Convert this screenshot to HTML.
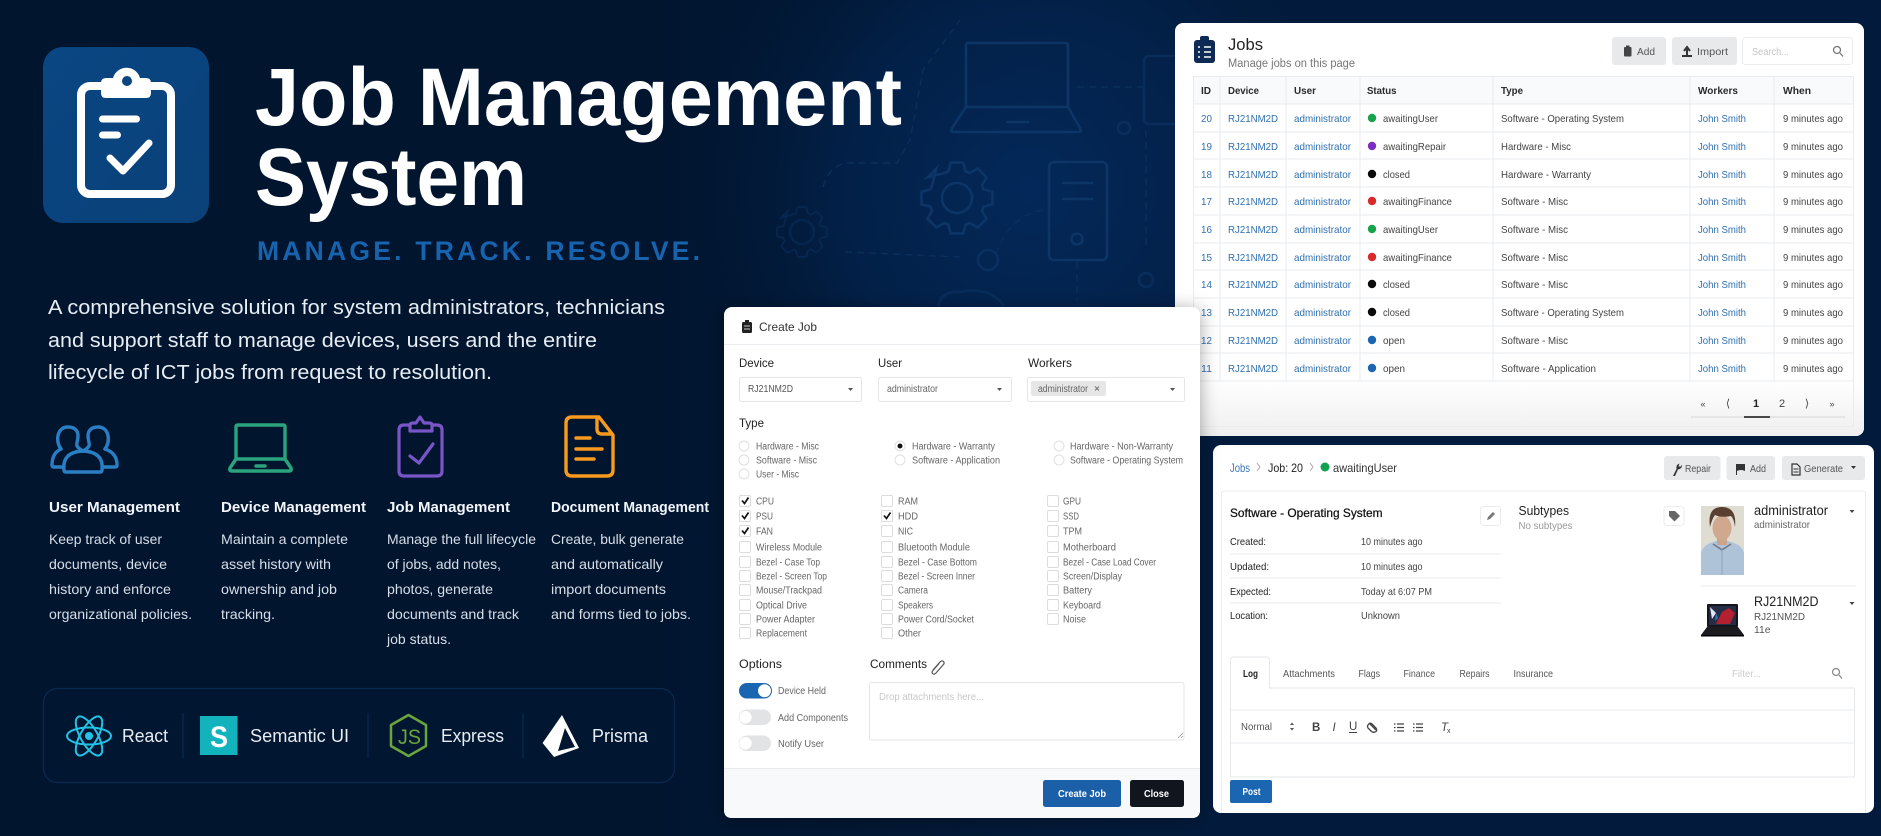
<!DOCTYPE html>
<html lang="en"><head><meta charset="utf-8"><title>Job Management System</title>
<style>
html,body{margin:0;padding:0;background:#01152f;width:1881px;height:836px;overflow:hidden}
svg{display:block}
text{font-family:"Liberation Sans",sans-serif;white-space:pre}
.b{font-weight:700}
.d{font-size:14px;fill:#d8dee8}
.h{font-size:15px;font-weight:700;fill:#f2f5f9}
.s{font-size:18.5px;fill:#e8edf3}
.c{font-size:10.5px;fill:#444}
.a{font-size:10.5px;fill:#2f6fb0}
.th{font-size:10.5px;font-weight:700;fill:#2a2a2a}
.m{font-size:10px;fill:#666}
.l{font-size:11.5px;fill:#222}
.k{font-size:10.5px;fill:#222}
.btn{font-size:10.5px;fill:#555}
.ln{stroke:#e9ebee;stroke-width:1;fill:none}
.cb{fill:#fff;stroke:#dcdcdc;stroke-width:1}
.ck{fill:none;stroke:#111;stroke-width:1.7}
.bg{fill:none;stroke:#0d3566;stroke-width:2.6}
.dash{fill:none;stroke:#0a2f5c;stroke-width:1.4;stroke-dasharray:7 5}
</style></head><body>
<svg xmlns="http://www.w3.org/2000/svg" width="1881" height="836" viewBox="0 0 1881 836">
<defs>
<linearGradient id="base" gradientUnits="userSpaceOnUse" x1="650" y1="0" x2="1150" y2="0"><stop offset="0" stop-color="#01152f"/><stop offset="1" stop-color="#021b3c"/></linearGradient>
<radialGradient id="bgg" gradientUnits="userSpaceOnUse" cx="1030" cy="190" r="340"><stop offset="0" stop-color="#03295a"/><stop offset=".55" stop-color="#03234e" stop-opacity=".75"/><stop offset="1" stop-color="#021b3c" stop-opacity="0"/></radialGradient>
<linearGradient id="lg" x1="0" y1="0" x2="1" y2="1"><stop offset="0" stop-color="#0a4683"/><stop offset="1" stop-color="#0a4178"/></linearGradient>
<linearGradient id="ft" x1="0" y1="0" x2="0" y2="1"><stop offset="0" stop-color="#fff"/><stop offset="1" stop-color="#efefef"/></linearGradient>
<filter id="sh" x="-10%" y="-10%" width="120%" height="120%"><feDropShadow dx="0" dy="2" stdDeviation="9" flood-color="#000" flood-opacity=".35"/></filter>
</defs>
<rect width="1881" height="836" fill="url(#base)"/>
<rect x="680" y="0" width="700" height="540" fill="url(#bgg)"/>

<!-- background decoration -->
<g>
<path class="bg" d="M968 43h98q2 0 2 2v62h-102v-62q0-2 2-2zM966 107l-14 21q-2 4 2 4h124q4 0 2-4l-12-21M1006 122h23"/>
<polygon class="bg" transform="translate(957 198)" points="-8.65,-26.6 -6.25,-35.45 6.25,-35.45 8.65,-26.6 12.7,-24.95 20.65,-29.5 29.5,-20.65 24.95,-12.7 26.6,-8.65 35.45,-6.25 35.45,6.25 26.6,8.65 24.95,12.7 29.5,20.65 20.65,29.5 12.7,24.95 8.65,26.6 6.25,35.45 -6.25,35.45 -8.65,26.6 -12.7,24.95 -20.65,29.5 -29.5,20.65 -24.95,12.7 -26.6,8.65 -35.45,6.25 -35.45,-6.25 -26.6,-8.65 -24.95,-12.7 -20.65,-29.5 -29.5,-20.65 -12.7,-24.95"/>
<circle class="bg" cx="957" cy="198" r="15"/>
<rect class="bg" x="1049" y="162" width="58" height="98" rx="5"/>
<path class="bg" d="M1062 183h31M1062 199h31"/>
<circle class="bg" cx="1077" cy="239" r="5.5"/>
<rect class="bg" x="1144" y="56" width="40" height="68" rx="5" opacity=".6"/>
<circle class="bg" cx="988" cy="260" r="10" opacity=".7"/>
<circle class="bg" cx="1146" cy="280" r="7" opacity=".6"/>
<circle class="bg" cx="1124" cy="128" r="6" opacity=".6"/>
<polygon class="bg" opacity=".45" transform="translate(802 232) scale(.7)" points="-8.65,-26.6 -6.25,-35.45 6.25,-35.45 8.65,-26.6 12.7,-24.95 20.65,-29.5 29.5,-20.65 24.95,-12.7 26.6,-8.65 35.45,-6.25 35.45,6.25 26.6,8.65 24.95,12.7 29.5,20.65 20.65,29.5 12.7,24.95 8.65,26.6 6.25,35.45 -6.25,35.45 -8.65,26.6 -12.7,24.95 -20.65,29.5 -29.5,20.65 -24.95,12.7 -26.6,8.65 -35.45,6.25 -35.45,-6.25 -26.6,-8.65 -24.95,-12.7 -20.65,-29.5 -29.5,-20.65 -12.7,-24.95"/>
<circle class="bg" cx="802" cy="232" r="12" opacity=".4"/>
<path class="dash" d="M823 187Q830 164 848 163H897L910 140L923 70L960 20"/>
<path class="dash" d="M845 252L960 257M996 254Q1010 215 1043 210M1077 87H1143M1146 130V250M1077 262V300"/>
<path class="bg" opacity=".5" d="M938 306q4-16 22-14q30-6 44 14"/>
</g>

<!-- logo -->
<rect x="43" y="47" width="166" height="176" rx="20" fill="url(#lg)"/>
<rect x="81" y="86" width="90" height="108" rx="9" fill="none" stroke="#fff" stroke-width="8"/>
<path d="M106 78h7a14 14 0 0 1 27 0h6q5 0 5 5v10q0 5-5 5h-40q-5 0-5-5v-10q0-5 5-5z" fill="#fff"/>
<circle cx="127" cy="81" r="5" fill="#0a4580"/>
<path d="M102.500 119h34M102.500 135h15M110 158l13 13l26-28" fill="none" stroke="#fff" stroke-width="7" stroke-linecap="round" stroke-linejoin="round"/>

<!-- title -->
<text class="b" x="255" y="125" font-size="82" fill="#fff" textLength="647" lengthAdjust="spacingAndGlyphs">Job Management</text>
<text class="b" x="255" y="205" font-size="82" fill="#fff" textLength="272" lengthAdjust="spacingAndGlyphs">System</text>
<text class="b" x="257" y="260" font-size="26.500" fill="#1763ad" textLength="443">MANAGE. TRACK. RESOLVE.</text>
<g font-size="20" fill="#e8edf3">
<text x="48" y="314" textLength="617" lengthAdjust="spacingAndGlyphs">A comprehensive solution for system administrators, technicians</text>
<text x="48" y="347" textLength="549" lengthAdjust="spacingAndGlyphs">and support staff to manage devices, users and the entire</text>
<text x="48" y="379" textLength="444" lengthAdjust="spacingAndGlyphs">lifecycle of ICT jobs from request to resolution.</text>
</g>

<!-- feature icons -->
<g fill="none" stroke="#2a7fc4" stroke-width="3.400" stroke-linejoin="round" stroke-linecap="round">
<path d="M64 470Q62 452 83 451Q104 452 102 470Q102 472 100 472H66Q64 472 64 470Z"/>
<path d="M61 449C55 441 57 427 68 427C75 427 78 431 78 436C78 441 76 443 77 446Q79 449 83 451"/>
<path d="M105 449C111 441 109 427 98 427C91 427 88 431 88 436C88 441 90 443 89 446Q87 449 83 451"/>
<path d="M61 449Q52 453 52 465Q52 467 54 467H62M105 449Q117 453 117 465Q117 467 115 467H104"/>
</g>
<g fill="none" stroke="#2ba37d" stroke-width="3.400" stroke-linejoin="round" stroke-linecap="round">
<path d="M238 425h45q2 0 2 2v32h-49v-32q0-2 2-2zM236 459l-6 9q-1 3 2 3h57q3 0 2-3l-6-9"/>
<path d="M256 466h9"/>
</g>
<g fill="none" stroke="#7a55c7" stroke-width="3.200" stroke-linejoin="round" stroke-linecap="round">
<path d="M409 425h-5q-5 0-5 5v41q0 5 5 5h33q5 0 5-5v-41q0-5-5-5h-5"/>
<path d="M410 431v-6q0-2 3-2h3l4-6l4 6h5q3 0 3 2v6z"/>
<path d="M410 456l9 7l14-19"/>
</g>
<g fill="none" stroke="#f79a1e" stroke-width="3.400" stroke-linejoin="round" stroke-linecap="round">
<path d="M572 417h27l14 18v35q0 6-6 6h-35q-6 0-6-6v-47q0-6 6-6z"/>
<path d="M597 418v11q0 5 5 5h10M576 438h14M576 449h26M576 459h18"/>
</g>

<!-- feature text -->
<text class="h" x="49" y="512" textLength="131" lengthAdjust="spacingAndGlyphs">User Management</text>
<text class="h" x="221" y="512" textLength="145" lengthAdjust="spacingAndGlyphs">Device Management</text>
<text class="h" x="387" y="512" textLength="123" lengthAdjust="spacingAndGlyphs">Job Management</text>
<text class="h" x="551" y="512" textLength="158" lengthAdjust="spacingAndGlyphs">Document Management</text>
<text class="d" x="49" y="544" textLength="113" lengthAdjust="spacingAndGlyphs">Keep track of user</text>
<text class="d" x="49" y="569" textLength="118" lengthAdjust="spacingAndGlyphs">documents, device</text>
<text class="d" x="49" y="594" textLength="122" lengthAdjust="spacingAndGlyphs">history and enforce</text>
<text class="d" x="49" y="619" textLength="143" lengthAdjust="spacingAndGlyphs">organizational policies.</text>
<text class="d" x="221" y="544" textLength="127" lengthAdjust="spacingAndGlyphs">Maintain a complete</text>
<text class="d" x="221" y="569" textLength="110" lengthAdjust="spacingAndGlyphs">asset history with</text>
<text class="d" x="221" y="594" textLength="116" lengthAdjust="spacingAndGlyphs">ownership and job</text>
<text class="d" x="221" y="619" textLength="54" lengthAdjust="spacingAndGlyphs">tracking.</text>
<text class="d" x="387" y="544" textLength="149" lengthAdjust="spacingAndGlyphs">Manage the full lifecycle</text>
<text class="d" x="387" y="569" textLength="114" lengthAdjust="spacingAndGlyphs">of jobs, add notes,</text>
<text class="d" x="387" y="594" textLength="106" lengthAdjust="spacingAndGlyphs">photos, generate</text>
<text class="d" x="387" y="619" textLength="132" lengthAdjust="spacingAndGlyphs">documents and track</text>
<text class="d" x="387" y="644" textLength="64" lengthAdjust="spacingAndGlyphs">job status.</text>
<text class="d" x="551" y="544" textLength="133" lengthAdjust="spacingAndGlyphs">Create, bulk generate</text>
<text class="d" x="551" y="569" textLength="112" lengthAdjust="spacingAndGlyphs">and automatically</text>
<text class="d" x="551" y="594" textLength="115" lengthAdjust="spacingAndGlyphs">import documents</text>
<text class="d" x="551" y="619" textLength="140" lengthAdjust="spacingAndGlyphs">and forms tied to jobs.</text>

<!-- tech box -->
<rect x="43.500" y="688.500" width="631" height="94" rx="14" fill="#011630" stroke="#082a4e" stroke-width="1.300"/>
<path d="M183 713v45M368 713v45M523 713v45" stroke="#082a4e" stroke-width="1.300"/>
<g fill="none" stroke="#22c3e6" stroke-width="2"><ellipse cx="89" cy="736" rx="22" ry="8.500"/><ellipse cx="89" cy="736" rx="22" ry="8.500" transform="rotate(60 89 736)"/><ellipse cx="89" cy="736" rx="22" ry="8.500" transform="rotate(120 89 736)"/></g>
<circle cx="89" cy="736" r="4" fill="#22c3e6"/>
<text class="s" x="122" y="742" textLength="46" lengthAdjust="spacingAndGlyphs">React</text>
<rect x="200" y="716" width="37.500" height="39" fill="#13b3bd"/>
<text class="b" x="210" y="747" font-size="30" fill="#fff" textLength="18" lengthAdjust="spacingAndGlyphs">S</text>
<text class="s" x="250" y="742" textLength="99" lengthAdjust="spacingAndGlyphs">Semantic UI</text>
<polygon points="408.500,715 426,725 426,746 408.500,756 391,746 391,725" fill="none" stroke="#6ba53d" stroke-width="2.500" stroke-linejoin="round"/>
<text x="398" y="744" font-size="21" fill="#6ba53d" textLength="23" lengthAdjust="spacingAndGlyphs">JS</text>
<text class="s" x="441" y="742" textLength="63" lengthAdjust="spacingAndGlyphs">Express</text>
<polygon points="562,715 579,748 554,757 542.600,743" fill="#fff"/>
<polygon points="565,728 575,747 558,751" fill="#011630"/>
<text class="s" x="592" y="742" textLength="56" lengthAdjust="spacingAndGlyphs">Prisma</text>

<!-- JOBS CARD -->
<rect x="1175" y="23" width="689" height="413" rx="8" fill="#fff"/>
<rect x="1175" y="380" width="689" height="56" rx="8" fill="url(#ft)"/>
<rect x="1194" y="40" width="21" height="23" rx="3" fill="#0d2b55"/>
<rect x="1200" y="36" width="9" height="7" rx="2" fill="#0d2b55"/>
<path d="M1204 47h7M1204 52h7M1204 57h7M1198 47h2M1198 52h2M1198 57h2" stroke="#fff" stroke-width="1.500"/>
<text x="1228" y="50" font-size="17" fill="#222" textLength="35" lengthAdjust="spacingAndGlyphs">Jobs</text>
<text x="1228" y="67" font-size="11.500" fill="#777" textLength="127" lengthAdjust="spacingAndGlyphs">Manage jobs on this page</text>
<rect x="1612" y="37" width="54" height="28" rx="3" fill="#e8e9ea"/>
<rect x="1624" y="47" width="7.500" height="9.500" rx="1" fill="#444"/><rect x="1626" y="45.500" width="3.500" height="2" fill="#444"/>
<text class="btn" x="1637" y="55" textLength="18" lengthAdjust="spacingAndGlyphs">Add</text>
<rect x="1672" y="37" width="65" height="28" rx="3" fill="#e8e9ea"/>
<path d="M1687 56v-7m-3 2l3-4l3 4M1682 56h10" fill="none" stroke="#333" stroke-width="2"/>
<text class="btn" x="1697" y="55" textLength="31" lengthAdjust="spacingAndGlyphs">Import</text>
<rect x="1742.500" y="37.500" width="110" height="27" rx="3" fill="#fff" stroke="#eceded"/>
<text x="1752" y="55" font-size="10.500" fill="#c4c4c4" textLength="37" lengthAdjust="spacingAndGlyphs">Search...</text>
<circle cx="1837" cy="50" r="3.500" fill="none" stroke="#777" stroke-width="1.300"/><path d="M1840 53l3 3.500" stroke="#777" stroke-width="1.300"/>

<rect x="1193" y="76" width="660" height="28" fill="#f9fafb"/>
<rect x="1193.500" y="76.500" width="660" height="350" class="ln"/>
<path class="ln" d="M1193 104h660M1193 132h660M1193 159h660M1193 187h660M1193 215h660M1193 243h660M1193 270h660M1193 298h660M1193 326h660M1193 353h660M1193 381h660M1220 76v305M1286 76v305M1360 76v305M1493 76v305M1690 76v305M1774 76v305"/>
<text class="th" x="1201" y="94" textLength="10" lengthAdjust="spacingAndGlyphs">ID</text>
<text class="th" x="1228" y="94" textLength="31" lengthAdjust="spacingAndGlyphs">Device</text>
<text class="th" x="1294" y="94" textLength="22" lengthAdjust="spacingAndGlyphs">User</text>
<text class="th" x="1367" y="94" textLength="29.500" lengthAdjust="spacingAndGlyphs">Status</text>
<text class="th" x="1501" y="94" textLength="22" lengthAdjust="spacingAndGlyphs">Type</text>
<text class="th" x="1698" y="94" textLength="40" lengthAdjust="spacingAndGlyphs">Workers</text>
<text class="th" x="1783" y="94" textLength="28" lengthAdjust="spacingAndGlyphs">When</text>

<g>
<circle cx="1372" cy="118" r="4.200" fill="#16a34a"/><circle cx="1372" cy="146" r="4.200" fill="#7b2fbe"/><circle cx="1372" cy="174" r="4.200" fill="#0a0a0a"/><circle cx="1372" cy="201" r="4.200" fill="#db2828"/><circle cx="1372" cy="229" r="4.200" fill="#16a34a"/><circle cx="1372" cy="257" r="4.200" fill="#db2828"/><circle cx="1372" cy="284" r="4.200" fill="#0a0a0a"/><circle cx="1372" cy="312" r="4.200" fill="#0a0a0a"/><circle cx="1372" cy="340" r="4.200" fill="#1a66b0"/><circle cx="1372" cy="368" r="4.200" fill="#1a66b0"/>
</g>
<!-- rows -->
<g>
<text class="a" x="1201" y="122" textLength="11" lengthAdjust="spacingAndGlyphs">20</text><text class="a" x="1228" y="122" textLength="50" lengthAdjust="spacingAndGlyphs">RJ21NM2D</text><text class="a" x="1294" y="122" textLength="57" lengthAdjust="spacingAndGlyphs">administrator</text><text class="c" x="1383" y="122" textLength="55" lengthAdjust="spacingAndGlyphs">awaitingUser</text><text class="c" x="1501" y="122" textLength="123" lengthAdjust="spacingAndGlyphs">Software - Operating System</text><text class="a" x="1698" y="122" textLength="48" lengthAdjust="spacingAndGlyphs">John Smith</text><text class="c" x="1783" y="122" textLength="60" lengthAdjust="spacingAndGlyphs">9 minutes ago</text>
<text class="a" x="1201" y="150" textLength="11" lengthAdjust="spacingAndGlyphs">19</text><text class="a" x="1228" y="150" textLength="50" lengthAdjust="spacingAndGlyphs">RJ21NM2D</text><text class="a" x="1294" y="150" textLength="57" lengthAdjust="spacingAndGlyphs">administrator</text><text class="c" x="1383" y="150" textLength="63" lengthAdjust="spacingAndGlyphs">awaitingRepair</text><text class="c" x="1501" y="150" textLength="70" lengthAdjust="spacingAndGlyphs">Hardware - Misc</text><text class="a" x="1698" y="150" textLength="48" lengthAdjust="spacingAndGlyphs">John Smith</text><text class="c" x="1783" y="150" textLength="60" lengthAdjust="spacingAndGlyphs">9 minutes ago</text>
<text class="a" x="1201" y="178" textLength="11" lengthAdjust="spacingAndGlyphs">18</text><text class="a" x="1228" y="178" textLength="50" lengthAdjust="spacingAndGlyphs">RJ21NM2D</text><text class="a" x="1294" y="178" textLength="57" lengthAdjust="spacingAndGlyphs">administrator</text><text class="c" x="1383" y="178" textLength="27" lengthAdjust="spacingAndGlyphs">closed</text><text class="c" x="1501" y="178" textLength="90" lengthAdjust="spacingAndGlyphs">Hardware - Warranty</text><text class="a" x="1698" y="178" textLength="48" lengthAdjust="spacingAndGlyphs">John Smith</text><text class="c" x="1783" y="178" textLength="60" lengthAdjust="spacingAndGlyphs">9 minutes ago</text>
<text class="a" x="1201" y="205" textLength="11" lengthAdjust="spacingAndGlyphs">17</text><text class="a" x="1228" y="205" textLength="50" lengthAdjust="spacingAndGlyphs">RJ21NM2D</text><text class="a" x="1294" y="205" textLength="57" lengthAdjust="spacingAndGlyphs">administrator</text><text class="c" x="1383" y="205" textLength="69" lengthAdjust="spacingAndGlyphs">awaitingFinance</text><text class="c" x="1501" y="205" textLength="67" lengthAdjust="spacingAndGlyphs">Software - Misc</text><text class="a" x="1698" y="205" textLength="48" lengthAdjust="spacingAndGlyphs">John Smith</text><text class="c" x="1783" y="205" textLength="60" lengthAdjust="spacingAndGlyphs">9 minutes ago</text>
<text class="a" x="1201" y="233" textLength="11" lengthAdjust="spacingAndGlyphs">16</text><text class="a" x="1228" y="233" textLength="50" lengthAdjust="spacingAndGlyphs">RJ21NM2D</text><text class="a" x="1294" y="233" textLength="57" lengthAdjust="spacingAndGlyphs">administrator</text><text class="c" x="1383" y="233" textLength="55" lengthAdjust="spacingAndGlyphs">awaitingUser</text><text class="c" x="1501" y="233" textLength="67" lengthAdjust="spacingAndGlyphs">Software - Misc</text><text class="a" x="1698" y="233" textLength="48" lengthAdjust="spacingAndGlyphs">John Smith</text><text class="c" x="1783" y="233" textLength="60" lengthAdjust="spacingAndGlyphs">9 minutes ago</text>
<text class="a" x="1201" y="261" textLength="11" lengthAdjust="spacingAndGlyphs">15</text><text class="a" x="1228" y="261" textLength="50" lengthAdjust="spacingAndGlyphs">RJ21NM2D</text><text class="a" x="1294" y="261" textLength="57" lengthAdjust="spacingAndGlyphs">administrator</text><text class="c" x="1383" y="261" textLength="69" lengthAdjust="spacingAndGlyphs">awaitingFinance</text><text class="c" x="1501" y="261" textLength="67" lengthAdjust="spacingAndGlyphs">Software - Misc</text><text class="a" x="1698" y="261" textLength="48" lengthAdjust="spacingAndGlyphs">John Smith</text><text class="c" x="1783" y="261" textLength="60" lengthAdjust="spacingAndGlyphs">9 minutes ago</text>
<text class="a" x="1201" y="288" textLength="11" lengthAdjust="spacingAndGlyphs">14</text><text class="a" x="1228" y="288" textLength="50" lengthAdjust="spacingAndGlyphs">RJ21NM2D</text><text class="a" x="1294" y="288" textLength="57" lengthAdjust="spacingAndGlyphs">administrator</text><text class="c" x="1383" y="288" textLength="27" lengthAdjust="spacingAndGlyphs">closed</text><text class="c" x="1501" y="288" textLength="67" lengthAdjust="spacingAndGlyphs">Software - Misc</text><text class="a" x="1698" y="288" textLength="48" lengthAdjust="spacingAndGlyphs">John Smith</text><text class="c" x="1783" y="288" textLength="60" lengthAdjust="spacingAndGlyphs">9 minutes ago</text>
<text class="a" x="1201" y="316" textLength="11" lengthAdjust="spacingAndGlyphs">13</text><text class="a" x="1228" y="316" textLength="50" lengthAdjust="spacingAndGlyphs">RJ21NM2D</text><text class="a" x="1294" y="316" textLength="57" lengthAdjust="spacingAndGlyphs">administrator</text><text class="c" x="1383" y="316" textLength="27" lengthAdjust="spacingAndGlyphs">closed</text><text class="c" x="1501" y="316" textLength="123" lengthAdjust="spacingAndGlyphs">Software - Operating System</text><text class="a" x="1698" y="316" textLength="48" lengthAdjust="spacingAndGlyphs">John Smith</text><text class="c" x="1783" y="316" textLength="60" lengthAdjust="spacingAndGlyphs">9 minutes ago</text>
<text class="a" x="1201" y="344" textLength="11" lengthAdjust="spacingAndGlyphs">12</text><text class="a" x="1228" y="344" textLength="50" lengthAdjust="spacingAndGlyphs">RJ21NM2D</text><text class="a" x="1294" y="344" textLength="57" lengthAdjust="spacingAndGlyphs">administrator</text><text class="c" x="1383" y="344" textLength="22" lengthAdjust="spacingAndGlyphs">open</text><text class="c" x="1501" y="344" textLength="67" lengthAdjust="spacingAndGlyphs">Software - Misc</text><text class="a" x="1698" y="344" textLength="48" lengthAdjust="spacingAndGlyphs">John Smith</text><text class="c" x="1783" y="344" textLength="60" lengthAdjust="spacingAndGlyphs">9 minutes ago</text>
<text class="a" x="1201" y="372" textLength="11" lengthAdjust="spacingAndGlyphs">11</text><text class="a" x="1228" y="372" textLength="50" lengthAdjust="spacingAndGlyphs">RJ21NM2D</text><text class="a" x="1294" y="372" textLength="57" lengthAdjust="spacingAndGlyphs">administrator</text><text class="c" x="1383" y="372" textLength="22" lengthAdjust="spacingAndGlyphs">open</text><text class="c" x="1501" y="372" textLength="95" lengthAdjust="spacingAndGlyphs">Software - Application</text><text class="a" x="1698" y="372" textLength="48" lengthAdjust="spacingAndGlyphs">John Smith</text><text class="c" x="1783" y="372" textLength="60" lengthAdjust="spacingAndGlyphs">9 minutes ago</text>
</g>
<!-- pagination -->
<g font-size="11" fill="#444" text-anchor="middle">
<text x="1703" y="407" font-size="9">«</text><text x="1728" y="407">⟨</text><text x="1756" y="407" class="b" fill="#222">1</text><text x="1782" y="407">2</text><text x="1807" y="407">⟩</text><text x="1832" y="407" font-size="9">»</text>
</g>
<path d="M1691 417h154" stroke="#dcdcdc" stroke-width="1.200"/><path d="M1744 417h26" stroke="#111" stroke-width="1.600"/>

<!-- DETAIL CARD -->
<rect x="1213" y="445" width="661" height="368" rx="8" fill="#fff"/>
<text x="1230" y="472" font-size="12" fill="#3b78b9" textLength="20" lengthAdjust="spacingAndGlyphs">Jobs</text>
<path d="M1257 463l3 4l-3 4M1310 463l3 4l-3 4" fill="none" stroke="#aaa"/>
<text x="1268" y="472" font-size="12" fill="#222" textLength="35" lengthAdjust="spacingAndGlyphs">Job: 20</text>
<circle cx="1325" cy="467" r="4.500" fill="#12a150"/>
<text x="1333" y="472" font-size="12" fill="#333" textLength="64" lengthAdjust="spacingAndGlyphs">awaitingUser</text>
<rect x="1664" y="456" width="56.500" height="24" rx="3" fill="#e8e9ea"/>
<path d="M1673 476l3.500-7q-1-4 3-5.500l-1 3h2.500l1-2q.5 4-4 5l-3 6.500z" fill="#333"/>
<text class="btn" x="1685" y="472" textLength="26" lengthAdjust="spacingAndGlyphs">Repair</text>
<rect x="1726.500" y="456" width="48.500" height="24" rx="3" fill="#e8e9ea"/>
<path d="M1736 464h9v7q-4-2-8 0v4h-1z" fill="#333"/>
<text class="btn" x="1750" y="472" textLength="16" lengthAdjust="spacingAndGlyphs">Add</text>
<rect x="1782" y="456" width="83" height="24" rx="3" fill="#e8e9ea"/>
<path d="M1792 464h5l3 3v8h-8z" fill="none" stroke="#333" stroke-width="1.200"/><path d="M1793.500 469h5M1793.500 472h5" stroke="#333"/>
<text class="btn" x="1804" y="472" textLength="39" lengthAdjust="spacingAndGlyphs">Generate</text>
<path d="M1851 466h5l-2.500 3z" fill="#333"/>
<path d="M1221.500 813v-319q0-3 3-3h638q3 0 3 3v319" fill="none" stroke="#eceded"/>

<text x="1230" y="517" font-size="12" fill="#111" stroke="#111" stroke-width=".25" textLength="152.500" lengthAdjust="spacingAndGlyphs">Software - Operating System</text>
<rect x="1480.500" y="506.500" width="20" height="19" rx="3" fill="#fff" stroke="#ececec"/>
<path d="M1487 520l1-3l5-5l2 2l-5 5z" fill="#777"/>
<text class="k" x="1230" y="545" textLength="36" lengthAdjust="spacingAndGlyphs">Created:</text>
<text class="k" x="1230" y="570" textLength="39" lengthAdjust="spacingAndGlyphs">Updated:</text>
<text class="k" x="1230" y="595" textLength="41" lengthAdjust="spacingAndGlyphs">Expected:</text>
<text class="k" x="1230" y="619" textLength="38" lengthAdjust="spacingAndGlyphs">Location:</text>
<text class="c" x="1361" y="545" textLength="61.500" lengthAdjust="spacingAndGlyphs">10 minutes ago</text>
<text class="c" x="1361" y="570" textLength="61.500" lengthAdjust="spacingAndGlyphs">10 minutes ago</text>
<text class="c" x="1361" y="595" textLength="71" lengthAdjust="spacingAndGlyphs">Today at 6:07 PM</text>
<text class="c" x="1361" y="619" textLength="39" lengthAdjust="spacingAndGlyphs">Unknown</text>
<path class="ln" d="M1230 554h271M1230 578h271M1230 603h271M1701 586h155"/>
<text x="1518.500" y="515" font-size="13" fill="#222" textLength="50.500" lengthAdjust="spacingAndGlyphs">Subtypes</text>
<text x="1518.500" y="529" font-size="10.500" fill="#999" textLength="54" lengthAdjust="spacingAndGlyphs">No subtypes</text>
<rect x="1664" y="506.500" width="20" height="19" rx="3" fill="#fff" stroke="#ececec"/>
<path d="M1669 511h6l5 5l-5.500 5.500l-5.500-5.500z" fill="#666"/>
<!-- photo -->
<rect x="1701" y="506" width="43" height="69" rx="1" fill="#dfdcd2"/>
<path d="M1701 575v-22q2-8 12-11l9-3l9 3q11 3 13 11v22z" fill="#aec2d8"/>
<rect x="1717" y="536" width="10" height="9" fill="#c9a58c"/>
<path d="M1713 544l9 6l9-6" fill="none" stroke="#6f7680" stroke-width="1.400"/>
<ellipse cx="1722" cy="528" rx="9.500" ry="12.500" fill="#cfa88e"/>
<path d="M1710 527q-3-20 12-20q15 0 13 20q-1-8-4-11q-10 2-16-1q-3 4-5 12z" fill="#5a4030"/>
<path d="M1722 548v27" stroke="#8fa5bd" stroke-width="1"/>
<text x="1754" y="515" font-size="13.500" fill="#222" textLength="74" lengthAdjust="spacingAndGlyphs">administrator</text>
<text x="1754" y="528" font-size="10.500" fill="#666" textLength="56" lengthAdjust="spacingAndGlyphs">administrator</text>
<path d="M1849.500 510h5l-2.500 3zM1849.500 602h5l-2.500 3z" fill="#444"/>
<!-- laptop -->
<rect x="1707" y="604" width="31" height="23" rx="1" fill="#15151b"/>
<path d="M1709 606h27v19h-27z" fill="#252c45"/>
<path d="M1716 624l6-12l7-4l6 5l-5 11z" fill="#b3202f"/><path d="M1710 607l6 6l-4 6z" fill="#dfe8f5"/><path d="M1716 613l2 5l-3 3z" fill="#3d74b9"/>
<path d="M1707 627h31l6 8h-43z" fill="#1b1b20"/><rect x="1701" y="635" width="43" height="1.500" fill="#000"/>
<text x="1754" y="606" font-size="13.500" fill="#222" textLength="64.500" lengthAdjust="spacingAndGlyphs">RJ21NM2D</text>
<text x="1754" y="620" font-size="10.500" fill="#555" textLength="51" lengthAdjust="spacingAndGlyphs">RJ21NM2D</text>
<text x="1754" y="633" font-size="10.500" fill="#555" textLength="16.500" lengthAdjust="spacingAndGlyphs">11e</text>
<!-- tabs -->
<path d="M1230.500 777v-117q0-3 3-3h33q3 0 3 3v28h585v89z" fill="#fff" stroke="#e6e7e8"/>
<path class="ln" d="M1231 710h624M1231 743h624"/>
<text class="b" x="1243" y="677" font-size="10.500" fill="#222" textLength="15" lengthAdjust="spacingAndGlyphs">Log</text>
<text class="btn" x="1283" y="677" textLength="52" lengthAdjust="spacingAndGlyphs">Attachments</text>
<text class="btn" x="1358.500" y="677" textLength="21.500" lengthAdjust="spacingAndGlyphs">Flags</text>
<text class="btn" x="1403.500" y="677" textLength="31.500" lengthAdjust="spacingAndGlyphs">Finance</text>
<text class="btn" x="1459.500" y="677" textLength="30" lengthAdjust="spacingAndGlyphs">Repairs</text>
<text class="btn" x="1513.500" y="677" textLength="39.500" lengthAdjust="spacingAndGlyphs">Insurance</text>
<text x="1732" y="677" font-size="10.500" fill="#ccc" textLength="29" lengthAdjust="spacingAndGlyphs">Filter...</text>
<circle cx="1836" cy="672" r="3.500" fill="none" stroke="#888" stroke-width="1.200"/><path d="M1839 675l3 3.500" stroke="#888" stroke-width="1.200"/>
<text class="btn" x="1241" y="730" textLength="31" lengthAdjust="spacingAndGlyphs">Normal</text>
<path d="M1290 725l2-2.500l2 2.500zM1290 728l2 2.500l2-2.500z" fill="#555"/>
<text class="b" x="1312" y="731" font-size="11.500" fill="#444">B</text>
<text x="1332.500" y="731" font-size="11.500" font-style="italic" fill="#444">I</text>
<text x="1349" y="730" font-size="11.500" fill="#444">U</text><path d="M1349 732.500h8" stroke="#444"/>
<path d="M1369 723l7 7M1368 725q2-3 4-1l4 4q2 3-1 4q-2 1-4-1l-3-3q-1-2 0-3z" fill="none" stroke="#444" stroke-width="1.300"/>
<path d="M1397 724h7M1397 727.500h7M1397 731h7M1394 724h1.500M1394 727.500h1.500M1394 731h1.500M1416 724h7M1416 727.500h7M1416 731h7M1413 724h1.500M1413 727.500h1.500M1413 731h1.500" stroke="#444" stroke-width="1.200"/>
<text x="1441" y="731" font-size="11.500" font-style="italic" fill="#444">T</text><text x="1447" y="733" font-size="7" fill="#444">x</text>
<rect x="1230" y="780" width="42" height="23" rx="2" fill="#1a66b0"/>
<text class="b" x="1242.500" y="795" font-size="10.500" fill="#fff" textLength="18" lengthAdjust="spacingAndGlyphs">Post</text>

<!-- MODAL -->
<rect x="724" y="307" width="476" height="511" rx="8" fill="#fff" filter="url(#sh)"/>
<path d="M724 768h476v42q0 8-8 8h-460q-8 0-8-8z" fill="#f8f9fa"/>
<path class="ln" d="M724 344.500h476M724 768.500h476"/>
<rect x="742" y="322" width="10" height="11" rx="1.500" fill="#222"/><rect x="745" y="320" width="4" height="3" fill="#222"/>
<path d="M744 326h6M744 329h6" stroke="#fff" stroke-width=".8"/>
<text x="759" y="331" font-size="12" fill="#333" textLength="58" lengthAdjust="spacingAndGlyphs">Create Job</text>
<text class="l" x="739" y="367" textLength="35" lengthAdjust="spacingAndGlyphs">Device</text>
<text class="l" x="878" y="367" textLength="24" lengthAdjust="spacingAndGlyphs">User</text>
<text class="l" x="1028" y="367" textLength="44" lengthAdjust="spacingAndGlyphs">Workers</text>
<g fill="#fff" stroke="#e4e5e6"><rect x="739.500" y="377.500" width="122" height="24" rx="2"/><rect x="878.500" y="377.500" width="133" height="24" rx="2"/><rect x="1027.500" y="377.500" width="157" height="24" rx="2"/></g>
<text x="748" y="392" font-size="10" fill="#555" textLength="45" lengthAdjust="spacingAndGlyphs">RJ21NM2D</text>
<text x="887" y="392" font-size="10" fill="#666" textLength="51" lengthAdjust="spacingAndGlyphs">administrator</text>
<rect x="1031" y="381" width="75" height="15" rx="2" fill="#e6e6e6"/>
<text x="1038" y="392" font-size="10" fill="#666" textLength="50" lengthAdjust="spacingAndGlyphs">administrator</text>
<path d="M1095 386.500l4 4M1099 386.500l-4 4" stroke="#777" stroke-width="1.100"/>
<path d="M848 388h5l-2.500 3zM997 388h5l-2.500 3zM1170 388h5l-2.500 3z" fill="#555"/>
<text class="l" x="739" y="427" textLength="25" lengthAdjust="spacingAndGlyphs">Type</text>

<g fill="#fff" stroke="#e0e0e0"><circle cx="744" cy="446" r="5"/><circle cx="744" cy="460" r="5"/><circle cx="744" cy="474" r="5"/><circle cx="900" cy="446" r="5"/><circle cx="900" cy="460" r="5"/><circle cx="1059" cy="446" r="5"/><circle cx="1059" cy="460" r="5"/></g>
<circle cx="900" cy="446" r="2.500" fill="#111"/>
<text class="m" x="756" y="449.500" textLength="63" lengthAdjust="spacingAndGlyphs">Hardware - Misc</text>
<text class="m" x="756" y="463.500" textLength="61" lengthAdjust="spacingAndGlyphs">Software - Misc</text>
<text class="m" x="756" y="477.500" textLength="43" lengthAdjust="spacingAndGlyphs">User - Misc</text>
<text class="m" x="912" y="449.500" textLength="83" lengthAdjust="spacingAndGlyphs">Hardware - Warranty</text>
<text class="m" x="912" y="463.500" textLength="88" lengthAdjust="spacingAndGlyphs">Software - Application</text>
<text class="m" x="1070" y="449.500" textLength="103" lengthAdjust="spacingAndGlyphs">Hardware - Non-Warranty</text>
<text class="m" x="1070" y="463.500" textLength="113" lengthAdjust="spacingAndGlyphs">Software - Operating System</text>

<!-- checkboxes -->
<g class="cb">
<rect x="739.500" y="495.500" width="11" height="11" rx="1.500"/><rect x="739.500" y="510.500" width="11" height="11" rx="1.500"/><rect x="739.500" y="525.500" width="11" height="11" rx="1.500"/><rect x="739.500" y="541.500" width="11" height="11" rx="1.500"/><rect x="739.500" y="556.500" width="11" height="11" rx="1.500"/><rect x="739.500" y="570.500" width="11" height="11" rx="1.500"/><rect x="739.500" y="584.500" width="11" height="11" rx="1.500"/><rect x="739.500" y="599.500" width="11" height="11" rx="1.500"/><rect x="739.500" y="613.500" width="11" height="11" rx="1.500"/><rect x="739.500" y="627.500" width="11" height="11" rx="1.500"/>
<rect x="881.500" y="495.500" width="11" height="11" rx="1.500"/><rect x="881.500" y="510.500" width="11" height="11" rx="1.500"/><rect x="881.500" y="525.500" width="11" height="11" rx="1.500"/><rect x="881.500" y="541.500" width="11" height="11" rx="1.500"/><rect x="881.500" y="556.500" width="11" height="11" rx="1.500"/><rect x="881.500" y="570.500" width="11" height="11" rx="1.500"/><rect x="881.500" y="584.500" width="11" height="11" rx="1.500"/><rect x="881.500" y="599.500" width="11" height="11" rx="1.500"/><rect x="881.500" y="613.500" width="11" height="11" rx="1.500"/><rect x="881.500" y="627.500" width="11" height="11" rx="1.500"/>
<rect x="1047.500" y="495.500" width="11" height="11" rx="1.500"/><rect x="1047.500" y="510.500" width="11" height="11" rx="1.500"/><rect x="1047.500" y="525.500" width="11" height="11" rx="1.500"/><rect x="1047.500" y="541.500" width="11" height="11" rx="1.500"/><rect x="1047.500" y="556.500" width="11" height="11" rx="1.500"/><rect x="1047.500" y="570.500" width="11" height="11" rx="1.500"/><rect x="1047.500" y="584.500" width="11" height="11" rx="1.500"/><rect x="1047.500" y="599.500" width="11" height="11" rx="1.500"/><rect x="1047.500" y="613.500" width="11" height="11" rx="1.500"/>
</g>
<path class="ck" d="M742 500.500l2.500 3l4-6M742 515.500l2.500 3l4-6M742 530.500l2.500 3l4-6M884 515.500l2.500 3l4-6"/>
<text class="m" x="756" y="504.500" textLength="18" lengthAdjust="spacingAndGlyphs">CPU</text>
<text class="m" x="756" y="519.500" textLength="17" lengthAdjust="spacingAndGlyphs">PSU</text>
<text class="m" x="756" y="534.500" textLength="17" lengthAdjust="spacingAndGlyphs">FAN</text>
<text class="m" x="756" y="550.500" textLength="66" lengthAdjust="spacingAndGlyphs">Wireless Module</text>
<text class="m" x="756" y="565.500" textLength="64" lengthAdjust="spacingAndGlyphs">Bezel - Case Top</text>
<text class="m" x="756" y="579.500" textLength="71" lengthAdjust="spacingAndGlyphs">Bezel - Screen Top</text>
<text class="m" x="756" y="593.500" textLength="66" lengthAdjust="spacingAndGlyphs">Mouse/Trackpad</text>
<text class="m" x="756" y="608.500" textLength="51" lengthAdjust="spacingAndGlyphs">Optical Drive</text>
<text class="m" x="756" y="622.500" textLength="59" lengthAdjust="spacingAndGlyphs">Power Adapter</text>
<text class="m" x="756" y="636.500" textLength="51" lengthAdjust="spacingAndGlyphs">Replacement</text>
<text class="m" x="898" y="504.500" textLength="20" lengthAdjust="spacingAndGlyphs">RAM</text>
<text class="m" x="898" y="519.500" textLength="20" lengthAdjust="spacingAndGlyphs">HDD</text>
<text class="m" x="898" y="534.500" textLength="15" lengthAdjust="spacingAndGlyphs">NIC</text>
<text class="m" x="898" y="550.500" textLength="72" lengthAdjust="spacingAndGlyphs">Bluetooth Module</text>
<text class="m" x="898" y="565.500" textLength="79" lengthAdjust="spacingAndGlyphs">Bezel - Case Bottom</text>
<text class="m" x="898" y="579.500" textLength="77" lengthAdjust="spacingAndGlyphs">Bezel - Screen Inner</text>
<text class="m" x="898" y="593.500" textLength="30" lengthAdjust="spacingAndGlyphs">Camera</text>
<text class="m" x="898" y="608.500" textLength="35" lengthAdjust="spacingAndGlyphs">Speakers</text>
<text class="m" x="898" y="622.500" textLength="76" lengthAdjust="spacingAndGlyphs">Power Cord/Socket</text>
<text class="m" x="898" y="636.500" textLength="23" lengthAdjust="spacingAndGlyphs">Other</text>
<text class="m" x="1063" y="504.500" textLength="18" lengthAdjust="spacingAndGlyphs">GPU</text>
<text class="m" x="1063" y="519.500" textLength="16" lengthAdjust="spacingAndGlyphs">SSD</text>
<text class="m" x="1063" y="534.500" textLength="19" lengthAdjust="spacingAndGlyphs">TPM</text>
<text class="m" x="1063" y="550.500" textLength="53" lengthAdjust="spacingAndGlyphs">Motherboard</text>
<text class="m" x="1063" y="565.500" textLength="93" lengthAdjust="spacingAndGlyphs">Bezel - Case Load Cover</text>
<text class="m" x="1063" y="579.500" textLength="59" lengthAdjust="spacingAndGlyphs">Screen/Display</text>
<text class="m" x="1063" y="593.500" textLength="29" lengthAdjust="spacingAndGlyphs">Battery</text>
<text class="m" x="1063" y="608.500" textLength="38" lengthAdjust="spacingAndGlyphs">Keyboard</text>
<text class="m" x="1063" y="622.500" textLength="23" lengthAdjust="spacingAndGlyphs">Noise</text>

<text class="l" x="739" y="668" textLength="43" lengthAdjust="spacingAndGlyphs">Options</text>
<text class="l" x="870" y="668" textLength="57" lengthAdjust="spacingAndGlyphs">Comments</text>
<path d="M933 670l7-8q2-2 3.500-.5q1.500 1.500-.5 3.500l-7 8q-2 2-3.500.5q-1-1.500.5-3l6-7" fill="none" stroke="#555" stroke-width="1.200"/>
<rect x="739" y="683" width="33" height="15.500" rx="7.750" fill="#1a66b0"/><circle cx="764.500" cy="690.750" r="6.500" fill="#fff"/>
<text class="m" x="778" y="694" textLength="48" lengthAdjust="spacingAndGlyphs">Device Held</text>
<rect x="739" y="709.500" width="32" height="15.500" rx="7.750" fill="#e2e3e4"/><circle cx="745.500" cy="717.250" r="6.500" fill="#fff" stroke="#e0e0e0" stroke-width=".6"/>
<text class="m" x="778" y="721" textLength="70" lengthAdjust="spacingAndGlyphs">Add Components</text>
<rect x="739" y="735.500" width="32" height="15.500" rx="7.750" fill="#e2e3e4"/><circle cx="745.500" cy="743.250" r="6.500" fill="#fff" stroke="#e0e0e0" stroke-width=".6"/>
<text class="m" x="778" y="747" textLength="46" lengthAdjust="spacingAndGlyphs">Notify User</text>
<rect x="869.500" y="682.500" width="314.500" height="57.500" rx="2" fill="#fff" stroke="#e4e5e6"/>
<text x="879" y="700" font-size="10" fill="#c8c8c8" textLength="105" lengthAdjust="spacingAndGlyphs">Drop attachments here...</text>
<path d="M1178 738l5-5M1181 738l2-2" stroke="#999" stroke-width=".8"/>
<rect x="1043" y="780" width="78" height="27" rx="2.500" fill="#1a5fa8"/>
<text class="b" x="1058" y="797" font-size="10.500" fill="#fff" textLength="48" lengthAdjust="spacingAndGlyphs">Create Job</text>
<rect x="1130" y="780" width="54" height="27" rx="2.500" fill="#10151e"/>
<text class="b" x="1144" y="797" font-size="10.500" fill="#fff" textLength="25" lengthAdjust="spacingAndGlyphs">Close</text>
</svg>
</body></html>
